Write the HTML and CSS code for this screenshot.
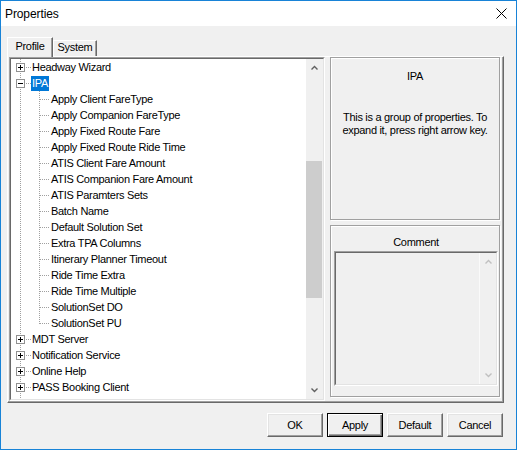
FILE: index.html
```html
<!DOCTYPE html>
<html>
<head>
<meta charset="utf-8">
<title>Properties</title>
<link rel="stylesheet" href="styles.css">
</head>
<body>
<svg class="defs" width="0" height="0" aria-hidden="true">
  <symbol id="t-plus" viewBox="0 0 20 16">
    <g shape-rendering="crispEdges">
      <line x1="9.5" y1="0" x2="9.5" y2="16" stroke="#a0a0a0" stroke-dasharray="1 1"/>
      <line x1="15" y1="8.5" x2="20" y2="8.5" stroke="#a0a0a0" stroke-dasharray="1 1"/>
      <rect x="5.5" y="4.5" width="8" height="8" fill="#fff" stroke="#919191"/>
      <path d="M7 8.5H12M9.5 6V11" stroke="#000"/>
    </g>
  </symbol>
  <symbol id="t-minus" viewBox="0 0 20 16">
    <g shape-rendering="crispEdges">
      <line x1="9.5" y1="0" x2="9.5" y2="16" stroke="#a0a0a0" stroke-dasharray="1 1"/>
      <line x1="15" y1="8.5" x2="20" y2="8.5" stroke="#a0a0a0" stroke-dasharray="1 1"/>
      <rect x="5.5" y="4.5" width="8" height="8" fill="#fff" stroke="#919191"/>
      <path d="M7 8.5H12" stroke="#000"/>
    </g>
  </symbol>
  <symbol id="t-line" viewBox="0 0 20 16">
    <line x1="9.5" y1="0" x2="9.5" y2="16" stroke="#a0a0a0" stroke-dasharray="1 1" shape-rendering="crispEdges"/>
  </symbol>
  <symbol id="t-child" viewBox="0 0 39 16">
    <g shape-rendering="crispEdges" stroke="#a0a0a0" stroke-dasharray="1 1">
      <line x1="9.5" y1="0" x2="9.5" y2="16"/>
      <line x1="28.5" y1="0" x2="28.5" y2="16"/>
      <line x1="29" y1="8.5" x2="39" y2="8.5"/>
    </g>
  </symbol>
  <symbol id="t-childlast" viewBox="0 0 39 16">
    <g shape-rendering="crispEdges" stroke="#a0a0a0" stroke-dasharray="1 1">
      <line x1="9.5" y1="0" x2="9.5" y2="16"/>
      <line x1="28.5" y1="0" x2="28.5" y2="9"/>
      <line x1="29" y1="8.5" x2="39" y2="8.5"/>
    </g>
  </symbol>
</svg>

<div class="window">
  <div class="titlebar">
    <span class="title">Properties</span>
    <svg class="close" width="11" height="11" viewBox="0 0 11 11"><path d="M0.5 0.5L10.5 10.5M10.5 0.5L0.5 10.5" stroke="#000" stroke-width="1"/></svg>
  </div>

  <div class="client">
    <div class="tabs">
      <div class="tab active">Profile</div>
      <div class="tab">System</div>
    </div>

    <div class="page">
      <div class="tree">
        <div class="tree-inner">
          <div class="tree-content">
            <div class="row"><svg class="g0"><use href="#t-plus"/></svg><span class="label">Headway Wizard</span></div>
            <div class="row"><svg class="g0"><use href="#t-minus"/></svg><span class="label selected">IPA</span></div>
            <div class="row"><svg class="g1"><use href="#t-child"/></svg><span class="label">Apply Client FareType</span></div>
            <div class="row"><svg class="g1"><use href="#t-child"/></svg><span class="label">Apply Companion FareType</span></div>
            <div class="row"><svg class="g1"><use href="#t-child"/></svg><span class="label">Apply Fixed Route Fare</span></div>
            <div class="row"><svg class="g1"><use href="#t-child"/></svg><span class="label">Apply Fixed Route Ride Time</span></div>
            <div class="row"><svg class="g1"><use href="#t-child"/></svg><span class="label">ATIS Client Fare Amount</span></div>
            <div class="row"><svg class="g1"><use href="#t-child"/></svg><span class="label">ATIS Companion Fare Amount</span></div>
            <div class="row"><svg class="g1"><use href="#t-child"/></svg><span class="label">ATIS Paramters Sets</span></div>
            <div class="row"><svg class="g1"><use href="#t-child"/></svg><span class="label">Batch Name</span></div>
            <div class="row"><svg class="g1"><use href="#t-child"/></svg><span class="label">Default Solution Set</span></div>
            <div class="row"><svg class="g1"><use href="#t-child"/></svg><span class="label">Extra TPA Columns</span></div>
            <div class="row"><svg class="g1"><use href="#t-child"/></svg><span class="label">Itinerary Planner Timeout</span></div>
            <div class="row"><svg class="g1"><use href="#t-child"/></svg><span class="label">Ride Time Extra</span></div>
            <div class="row"><svg class="g1"><use href="#t-child"/></svg><span class="label">Ride Time Multiple</span></div>
            <div class="row"><svg class="g1"><use href="#t-child"/></svg><span class="label">SolutionSet DO</span></div>
            <div class="row"><svg class="g1"><use href="#t-childlast"/></svg><span class="label">SolutionSet PU</span></div>
            <div class="row"><svg class="g0"><use href="#t-plus"/></svg><span class="label">MDT Server</span></div>
            <div class="row"><svg class="g0"><use href="#t-plus"/></svg><span class="label">Notification Service</span></div>
            <div class="row"><svg class="g0"><use href="#t-plus"/></svg><span class="label">Online Help</span></div>
            <div class="row"><svg class="g0"><use href="#t-plus"/></svg><span class="label">PASS Booking Client</span></div>
            <div class="row"><svg class="g0"><use href="#t-line"/></svg></div>
          </div>
          <div class="vscroll">
            <div class="sb-btn"><svg width="7" height="5" viewBox="0 0 7 5"><polyline points="0.5,4.5 3.5,1.5 6.5,4.5" fill="none" stroke="#606060" stroke-width="1.4"/></svg></div>
            <div class="sb-track"><div class="sb-thumb"></div></div>
            <div class="sb-btn"><svg width="7" height="5" viewBox="0 0 7 5"><polyline points="0.5,0.5 3.5,3.5 6.5,0.5" fill="none" stroke="#606060" stroke-width="1.4"/></svg></div>
          </div>
        </div>
      </div>

      <div class="side">
        <div class="panel info">
          <div class="info-title">IPA</div>
          <div class="info-text">This is a group of properties. To<br>expand it, press right arrow key.</div>
        </div>
        <div class="panel comment">
          <div class="comment-label">Comment</div>
          <div class="comment-box">
            <div class="comment-inner">
              <div class="comment-text"></div>
              <div class="vscroll disabled">
                <div class="sb-btn"><svg width="7" height="5" viewBox="0 0 7 5"><polyline points="0.5,4.5 3.5,1.5 6.5,4.5" fill="none" stroke="#c0c0c0" stroke-width="1.4"/></svg></div>
                <div class="sb-track"></div>
                <div class="sb-btn"><svg width="7" height="5" viewBox="0 0 7 5"><polyline points="0.5,0.5 3.5,3.5 6.5,0.5" fill="none" stroke="#c0c0c0" stroke-width="1.4"/></svg></div>
              </div>
            </div>
          </div>
        </div>
      </div>
    </div>

    <div class="buttons">
      <button class="btn">OK</button>
      <button class="btn default">Apply</button>
      <button class="btn">Default</button>
      <button class="btn">Cancel</button>
    </div>
  </div>
</div>
</body>
</html>
```

FILE: styles.css
```css
* { box-sizing: border-box; }

html, body {
  margin: 0;
  padding: 0;
}

body {
  width: 517px;
  height: 450px;
  background: #f0f0f0;
  font-family: "Liberation Sans", Arial, sans-serif;
  font-size: 11px;
  letter-spacing: -0.3px;
  color: #000;
  overflow: hidden;
}

.defs {
  display: block;
  width: 0;
  height: 0;
  overflow: hidden;
}

.window {
  width: 517px;
  height: 450px;
  border: 1px solid #1883d7;
  background: #f0f0f0;
  display: flex;
  flex-direction: column;
}

.titlebar {
  flex: none;
  height: 25px;
  background: #fff;
  display: flex;
  align-items: center;
  padding: 0 9px 0 4px;
}

.title {
  font-size: 12px;
  letter-spacing: -0.1px;
}

.close {
  display: block;
  margin-left: auto;
}

.client {
  flex: 1;
  display: flex;
  flex-direction: column;
  padding: 11px 13px 0 6px;
}

/* tabs */
.tabs {
  display: flex;
  align-items: flex-end;
  height: 19px;
}

.tab {
  width: 44px;
  height: 16px;
  border-top: 1px solid #fff;
  border-left: 1px solid #fff;
  border-right: 1px solid #696969;
  box-shadow: inset -1px 0 #a0a0a0;
  line-height: 13px;
  text-align: center;
  background: #f0f0f0;
}

.tab.active {
  width: 46px;
  height: 20px;
  line-height: 16px;
  margin-bottom: -1px;
  position: relative;
  z-index: 1;
}

/* tab page */
.page {
  width: 497px;
  height: 347px;
  display: flex;
  align-items: flex-start;
  gap: 5px;
  padding: 0 3px 1px 1px;
  border: 1px solid;
  border-color: #fff #696969 #696969 #fff;
  box-shadow: inset -1px -1px #a0a0a0;
}

/* tree */
.tree {
  width: 316px;
  height: 344px;
  border: 1px solid;
  border-color: #a0a0a0 #fff #fff #a0a0a0;
}

.tree-inner {
  height: 100%;
  display: flex;
  border: 1px solid;
  border-color: #696969 #e3e3e3 #e3e3e3 #696969;
  background: #fff;
}

.tree-content {
  width: 295px;
  height: 340px;
  overflow: hidden;
  background: #fff;
}

.row {
  height: 16px;
  display: flex;
  align-items: flex-end;
  white-space: nowrap;
}

.row svg {
  display: block;
  flex: none;
  height: 16px;
  align-self: flex-start;
}

.g0 { width: 20px; }
.g1 { width: 39px; }

.label {
  height: 15px;
  line-height: 15px;
  padding: 0 1px;
}

.label.selected {
  background: #0078d7;
  color: #fff;
}

/* scrollbar */
.vscroll {
  width: 17px;
  flex: none;
  display: flex;
  flex-direction: column;
  background: #f0f0f0;
}

.sb-btn {
  height: 17px;
  flex: none;
  display: flex;
  align-items: center;
  justify-content: center;
}

.sb-btn svg { display: block; }

.sb-track {
  flex: 1;
}

.sb-thumb {
  margin: 85px 1px 0 0;
  height: 137px;
  background: #cdcdcd;
}

/* side panels */
.side {
  width: 170px;
  display: flex;
  flex-direction: column;
  gap: 5px;
}

.panel {
  border: 1px solid #a0a0a0;
  box-shadow: inset 1px 1px #fff, 1px 1px #fff;
  text-align: center;
}

.info {
  height: 163px;
  padding-top: 12px;
}

.info-title {
  line-height: 13px;
}

.info-text {
  margin-top: 28px;
  line-height: 13px;
}

.comment {
  height: 172px;
  padding: 10px 1px 0 3px;
}

.comment-label {
  line-height: 13px;
}

.comment-box {
  margin-top: 2px;
  width: 164px;
  height: 135px;
  border: 1px solid;
  border-color: #a0a0a0 #fff #fff #a0a0a0;
}

.comment-inner {
  height: 100%;
  display: flex;
  border: 1px solid;
  border-color: #696969 #e3e3e3 #e3e3e3 #696969;
  background: #f0f0f0;
}

.comment-text {
  flex: 1;
}

.vscroll.disabled {
  border-left: 1px solid #fafafa;
}

/* buttons */
.buttons {
  display: flex;
  justify-content: flex-end;
  gap: 4px;
  margin-top: 10px;
}

.btn {
  width: 56px;
  height: 24px;
  padding: 0;
  margin: 0;
  font-family: "Liberation Sans", Arial, sans-serif;
  font-size: 11px;
  letter-spacing: -0.3px;
  color: #000;
  background: #f0f0f0;
  border: 1px solid;
  border-color: #fff #696969 #696969 #fff;
  box-shadow: inset -1px -1px #a0a0a0, inset 1px 1px #e3e3e3;
  border-radius: 0;
}

.btn.default {
  border-color: #000;
  box-shadow: inset 1px 1px #fff, inset -1px -1px #696969, inset -2px -2px #a0a0a0;
}
```
